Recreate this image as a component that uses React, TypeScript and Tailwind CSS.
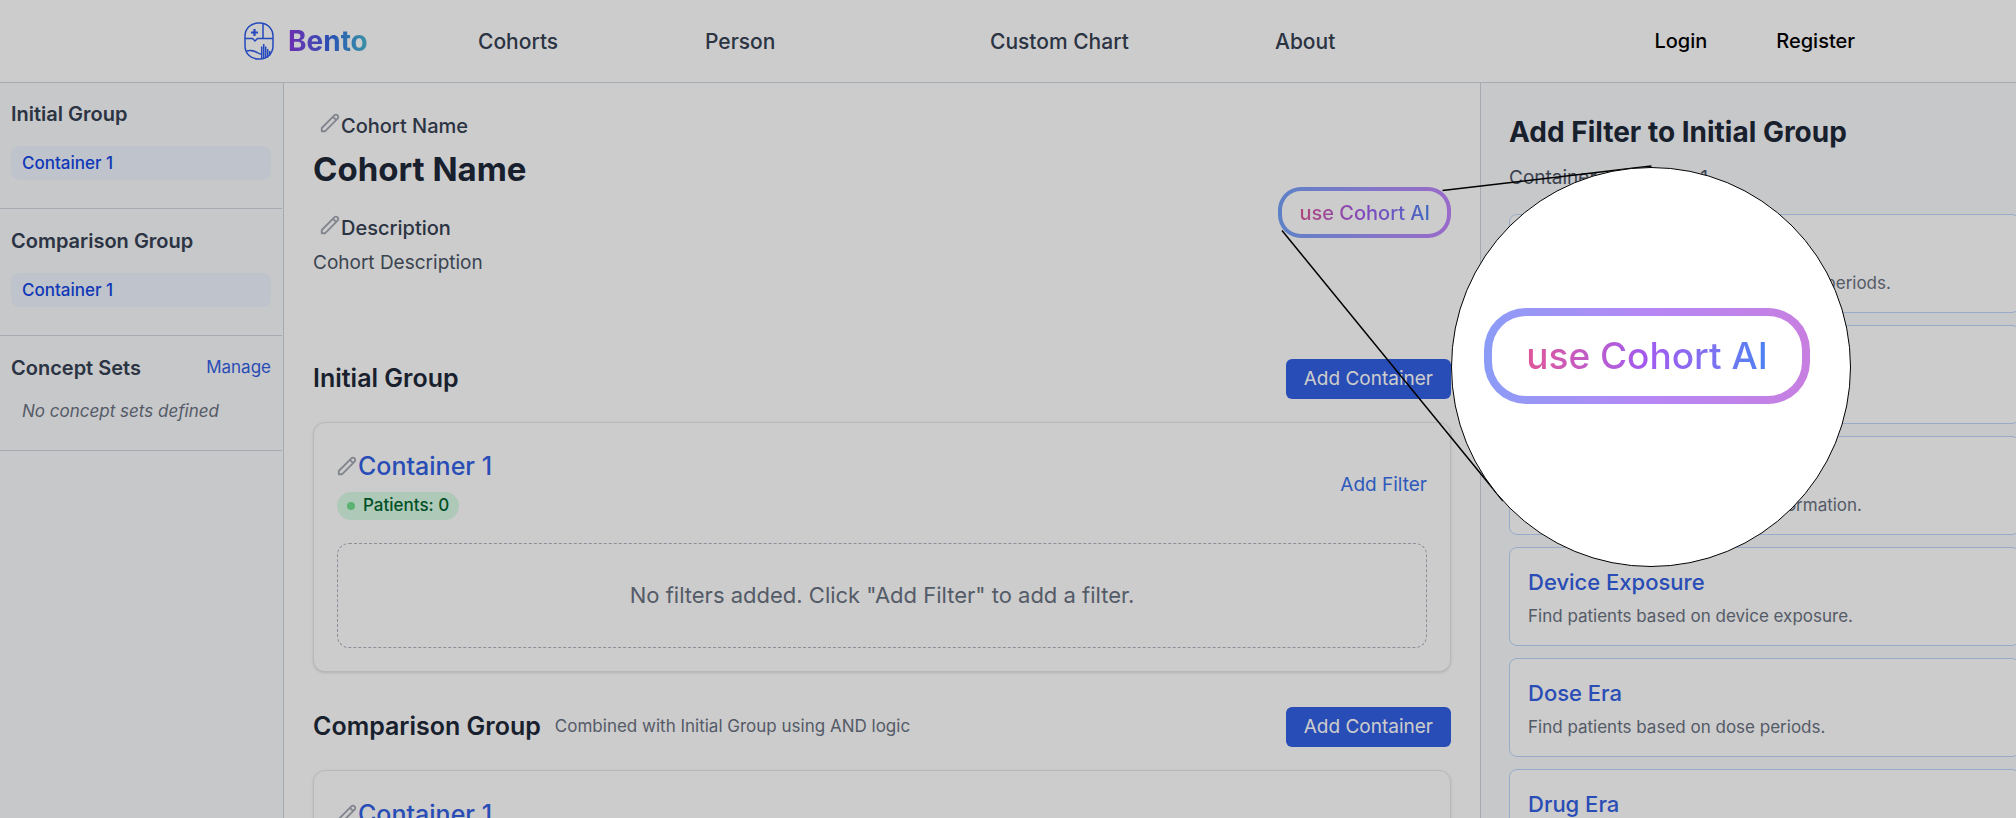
import React from "react";

const EMPTY_TEXT = 'No filters added. Click "Add Filter" to add a filter.';

const filters = [
  { name: "Condition Era", text: "Find patients based on condition era periods." },
  { name: "Condition Occurrence", text: "Find patients based on diagnoses." },
  { name: "Death", text: "Find patients based on death information." },
  { name: "Device Exposure", text: "Find patients based on device exposure." },
  { name: "Dose Era", text: "Find patients based on dose periods." },
  { name: "Drug Era", text: "Find patients based on drug periods." },
];

function Logo() {
  return (
    <svg viewBox="0 0 30 38" className="h-[38px] w-[30px]" fill="none" stroke="#2f5cec" strokeWidth="1.5" aria-hidden="true">
      <rect x="1" y="1" width="28" height="36" rx="13" />
      <path d="M19 1.500V16.500M1 16.500h7.500l2.500 2.500 2.500-2.500H29" />
      <path d="M10.500 7v7M7 10.500h7" strokeWidth="2.2" />
      <path d="M2.500 29c5-1.500 8 0 10.500 1.500 1.500 1 3 1.500 4.500 1.500" />
      <path d="M17.700 36.500V24.500M19.700 36.500V22M21.700 36V24.500M23.700 35.500V27M25.700 33.500V29" strokeWidth="1.500" />
    </svg>
  );
}

function Pencil() {
  return (
    <svg viewBox="0 0 24 24" className="size-[22px] shrink-0" fill="none" stroke="#a3a7b2" strokeWidth="2" strokeLinecap="round" strokeLinejoin="round" aria-hidden="true">
      <path d="M15.232 5.232l3.536 3.536m-2.036-5.036a2.500 2.500 0 1 1 3.536 3.536L6.500 21.036H3v-3.572L16.732 3.732z" />
    </svg>
  );
}

function SideGroup({ title }: { title: string }) {
  return (
    <section className="h-[127px] border-b border-gray-300 px-[11px] pt-[18px]">
      <h3 className="text-[20px] leading-7 font-semibold text-gray-700">{title}</h3>
      <a href="#container" className="mt-[18px] block rounded-lg bg-blue-50 px-[11px] text-[17px] leading-[34px] font-medium text-blue-700">
        Container 1
      </a>
    </section>
  );
}

function FieldLabel({ children }: { children: string }) {
  return (
    <div className="flex items-start pl-[6px]">
      <Pencil />
      <span className="text-[20px] leading-7 font-medium text-gray-700">{children}</span>
    </div>
  );
}

function Group({ title, note }: { title: string; note?: string }) {
  return (
    <section className="mb-[35px]">
      <div className="flex h-10 items-center">
        <h2 className="text-[25px] font-semibold text-gray-800">{title}</h2>
        {note && <span className="ml-[14px] text-[17px] text-gray-500">{note}</span>}
        <button className="ml-auto h-10 rounded-md bg-[#3461e4] px-[18px] text-[19px] text-white">Add Container</button>
      </div>
      <div className="mt-[23px] rounded-xl border border-gray-200 bg-white px-[23px] pt-[27px] pb-[23px] shadow-sm">
        <div className="flex items-center justify-between">
          <div>
            <div className="-ml-px flex items-center">
              <Pencil />
              <h3 className="text-[25px] leading-8 font-medium text-[#3461e4]">Container 1</h3>
            </div>
            <div className="mt-[10px] flex h-7 w-fit items-center gap-2 rounded-full bg-green-100 px-[10px] text-[17px] font-medium text-green-800">
              <span className="size-2 rounded-full bg-[#71e08f]" />
              Patients: 0
            </div>
          </div>
          <button className="text-[19px] text-[#3b71ea]">Add Filter</button>
        </div>
        <p className="mt-[23px] rounded-xl border border-dashed border-gray-400/80 py-[38px] text-center text-[22px] leading-[27px] text-gray-500">
          {EMPTY_TEXT}
        </p>
      </div>
    </section>
  );
}

export default function App() {
  return (
    <div className="relative flex h-screen flex-col overflow-hidden bg-white font-['Inter',sans-serif]">
      <header className="flex h-[83px] shrink-0 items-center border-b border-[#cfd8e2]">
        <div className="flex w-[478px] items-center gap-[14px] pl-[244px]">
          <Logo />
          <span className="bg-linear-to-r from-[#8638e0] via-[#3560e0] to-[#4cb8d0] bg-clip-text text-[28px] font-bold text-transparent">Bento</span>
        </div>
        <nav className="flex grow pt-px text-[21px] font-medium text-gray-700">
          <a href="#cohorts" className="w-[227px]">Cohorts</a>
          <a href="#person" className="w-[285px]">Person</a>
          <a href="#chart" className="w-[285px]">Custom Chart</a>
          <a href="#about">About</a>
        </nav>
        <div className="flex gap-[69px] pr-[161px] text-[20px] font-medium text-black">
          <a href="#login">Login</a>
          <a href="#register">Register</a>
        </div>
      </header>
      <div className="flex min-h-0 grow">
        <aside className="w-[284px] shrink-0 border-r border-gray-300 bg-[#f9fafd]">
          <div className="-mt-px pr-px">
            <SideGroup title="Initial Group" />
            <SideGroup title="Comparison Group" />
            <section className="h-[115px] border-b border-gray-300 px-[11px] pt-[18px]">
              <div className="flex items-center justify-between">
                <h3 className="text-[20px] leading-7 font-semibold text-gray-700">Concept Sets</h3>
                <a href="#manage" className="text-[17px] text-[#3461e4]">Manage</a>
              </div>
              <p className="mt-[17px] pl-[11px] text-[17px] leading-6 text-gray-500 italic">No concept sets defined</p>
            </section>
          </div>
        </aside>
        <main className="min-w-0 grow overflow-hidden px-[29px] pt-[29px]">
          <div className="flex items-center justify-between">
            <div>
              <FieldLabel>Cohort Name</FieldLabel>
              <h1 className="mt-[9px] text-[33px] leading-10 font-bold text-gray-800">Cohort Name</h1>
              <div className="mt-[25px]">
                <FieldLabel>Description</FieldLabel>
              </div>
              <p className="mt-[7px] text-[19px] leading-7 text-gray-600">Cohort Description</p>
            </div>
            <button className="mb-[39px] self-end rounded-[23px] bg-linear-to-r from-[#74a2f8] to-[#c084fc] p-1">
              <span className="flex h-[43px] items-center rounded-[19px] bg-white px-[17px]">
                <span className="bg-linear-to-r from-[#e0559a] via-[#a259f0] to-[#4a82f2] bg-clip-text text-[20px] font-medium text-transparent">use Cohort AI</span>
              </span>
            </button>
          </div>
          <div className="mt-[82px]">
            <Group title="Initial Group" />
            <Group title="Comparison Group" note="Combined with Initial Group using AND logic" />
          </div>
        </main>
        <aside className="w-[536px] shrink-0 overflow-hidden border-l border-[#cfd4de] bg-[#f9fafd] pt-[31px] pl-[28px]">
          <h2 className="text-[28px] leading-9 font-bold text-gray-800">Add Filter to Initial Group</h2>
          <p className="mt-[14px] text-[19px] leading-7 text-gray-600">Container: Container 1</p>
          <div className="-mr-1 mt-[22px] flex flex-col gap-3">
            {filters.map((f) => (
              <button key={f.name} className="h-[99px] shrink-0 rounded-lg border border-[#bfd7fd] bg-white px-[18px] pt-px text-left">
                <span className="block text-[22px] leading-7 font-medium text-[#3461e4]">{f.name}</span>
                <span className="mt-[10px] block text-[17px] leading-5 text-gray-500">{f.text}</span>
              </button>
            ))}
          </div>
        </aside>
      </div>

      <div className="pointer-events-none absolute inset-0 bg-black/20" />
      <svg className="pointer-events-none absolute top-0 left-0 h-[818px] w-[2016px]" viewBox="0 0 2016 818" fill="none" stroke="#000" strokeWidth="1.500" aria-hidden="true">
        <path d="M1442.500 190.500L1651.500 166M1282 230.500L1503 501" />
      </svg>
      <div className="absolute top-[167px] left-[1451px] flex size-[400px] items-center justify-center rounded-full border border-black bg-white">
        <div className="-mt-[22px] -ml-2 rounded-[42px] bg-linear-to-r from-[#8b9cf6] via-[#b587f5] to-[#c77fe0] p-2">
          <div className="flex h-20 items-center rounded-[34px] bg-white px-[34px]">
            <span className="bg-linear-to-r from-[#e0559a] via-[#a259f0] to-[#4a82f2] bg-clip-text text-[37px] font-medium text-transparent">use Cohort AI</span>
          </div>
        </div>
      </div>
    </div>
  );
}
